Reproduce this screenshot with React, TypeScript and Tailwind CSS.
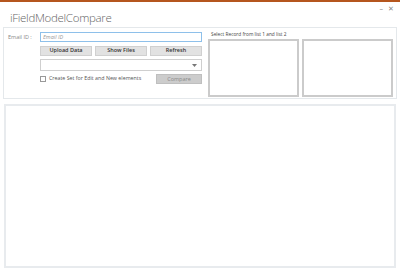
const font = { fontFamily: '"Open Sans", "Noto Sans", sans-serif' };

export default function App() {
  return (
    <div className="relative h-[273px] w-[400px] overflow-hidden bg-white text-[#444]" style={font}>
      <div className="h-[2px] bg-[#b5561e]" />
      <TitleBar />
      <TopPanel />
      <div className="mx-[4px] mt-[5px] h-[164px] border-2 border-[#e8ebee] bg-white" />
    </div>
  );
}

function TitleBar() {
  return (
    <div className="flex h-[25px] items-start justify-between pl-[10px] pr-[6px]">
      <h1 className="mt-[10px] text-[11.5px] font-light leading-none tracking-[-0.3px] text-[#666]">iFieldModelCompare</h1>
      <div className="mt-[3px] flex items-center gap-[5px] text-[7px] text-[#888]">
        <span className="leading-none">–</span>
        <span className="leading-none">✕</span>
      </div>
    </div>
  );
}

function TopPanel() {
  return (
    <div className="mx-[3px] flex h-[72px] border border-[#e4e8eb]">
      <div className="flex w-[199px] flex-col pl-[4px] pt-[4px]">
        <div className="flex items-center">
          <label className="w-[32px] text-[5.5px] text-[#888]">Email ID :</label>
          <input
            placeholder="Email ID"
            className="h-[10px] w-[162px] border border-[#8ec0ea] px-[2px] text-[5.5px] italic outline-none placeholder:text-[#999]"
          />
        </div>
        <div className="ml-[32px] mt-[4px] flex gap-[3px]">
          <Btn label="Upload Data" />
          <Btn label="Show Files" />
          <Btn label="Refresh" />
        </div>
        <div className="ml-[32px] mt-[3px] flex h-[12px] w-[162px] items-center justify-end border border-[#cfcfcf] pr-[4px]">
          <svg width="5" height="3" viewBox="0 0 5 3">
            <path d="M0 0h5L2.5 3z" fill="#777" />
          </svg>
        </div>
        <div className="ml-[32px] mt-[3px] flex w-[162px] items-center">
          <span className="h-[6px] w-[6px] border border-[#999] bg-white" />
          <span className="ml-[3px] text-[5.3px] text-[#555]">Create Set for Edit and New elements</span>
          <button className="ml-auto h-[10px] w-[46px] border border-[#bfbfbf] bg-[#cccccc] text-[5.5px] text-[#8a8a8a]">Compare</button>
        </div>
      </div>
      <div className="flex flex-1 flex-col pl-[5px] pr-[3px]">
        <p className="ml-[3px] mt-[3px] text-[4.8px] leading-[7px] text-[#444]">Select Record from list 1 and list 2</p>
        <div className="mt-[1px] flex gap-[3px]">
          <div className="h-[58px] w-[91px] border-2 border-[#cbcbcb] bg-white" />
          <div className="h-[58px] w-[91px] border-2 border-[#cbcbcb] bg-white" />
        </div>
      </div>
    </div>
  );
}

function Btn({ label }: { label: string }) {
  return (
    <button className="h-[10px] w-[52px] border border-[#d0d0d0] bg-[#e2e2e2] text-[5.5px] font-semibold leading-none text-[#333]">
      {label}
    </button>
  );
}
